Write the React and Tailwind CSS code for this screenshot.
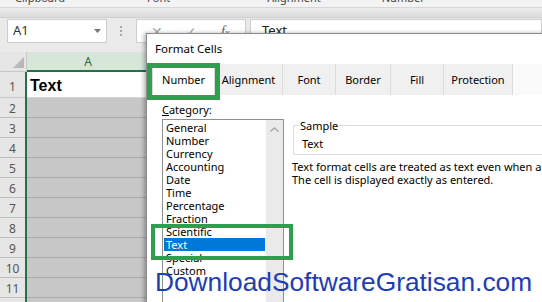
import React from "react";

const ui = { fontFamily: '"Noto Sans", "Open Sans", sans-serif' };
const arial = { fontFamily: '"Liberation Sans", Arial, sans-serif' };

const items = ["General","Number","Currency","Accounting","Date","Time","Percentage","Fraction","Scientific","Text","Special","Custom"];
const tabs = [
  { label: "Number", w: "w-[63px]" },
  { label: "Alignment", w: "w-[68px]" },
  { label: "Font", w: "w-[53px]" },
  { label: "Border", w: "w-[55px]" },
  { label: "Fill", w: "w-[53px]" },
  { label: "Protection", w: "w-[69px]" },
];

function Launcher() {
  return (
    <svg width="9" height="9" viewBox="0 0 9 9" className="mt-[-4px]">
      <path d="M0.5 0.5h8v8" fill="none" stroke="#777" />
      <path d="M3 3l4 4M7 4v3H4" fill="none" stroke="#777" />
    </svg>
  );
}

export default function App() {
  return (
    <div className="relative w-[542px] h-[302px] overflow-hidden bg-[#eaeaea]" style={ui}>
      {/* ribbon group labels */}
      <div className="h-[8px] bg-[#f3f3f3] overflow-hidden flex items-start text-[11px] text-[#444] border-b border-[#d6d6d6]">
        <div className="flex items-start mt-[-9px] leading-[13px]">
          <span className="ml-[15px]">Clipboard</span>
          <span className="ml-[18px] mt-[4px]"><Launcher /></span>
          <span className="ml-[55px]">Font</span>
          <span className="ml-[60px] mt-[4px]"><Launcher /></span>
          <span className="ml-[28px]">Alignment</span>
          <span className="ml-[30px] mt-[4px]"><Launcher /></span>
          <span className="ml-[22px]">Number</span>
          <span className="ml-[24px] mt-[4px]"><Launcher /></span>
        </div>
      </div>
      {/* ribbon bottom band */}
      <div className="h-[10px] bg-gradient-to-b from-[#ececec] to-[#dcdcdc] border-b border-[#cfcfcf]" />
      {/* formula bar */}
      <div className="h-[34px] flex items-start pt-[1px]">
        <div className="ml-[7px] w-[100px] h-[24px] bg-white border border-[#cdcdcd] flex items-center justify-between px-[5px]">
          <span className="text-[13px] text-[#333]">A1</span>
          <svg width="7" height="4" viewBox="0 0 7 4"><path d="M0 0h7L3.5 4z" fill="#777" /></svg>
        </div>
        <div className="ml-[13px] mt-[7px] flex flex-col gap-[2px]">
          <span className="w-[2px] h-[2px] bg-[#a8a8a8]" />
          <span className="w-[2px] h-[2px] bg-[#a8a8a8]" />
          <span className="w-[2px] h-[2px] bg-[#a8a8a8]" />
        </div>
        <div className="ml-[14px] w-[110px] h-[24px] bg-white border border-[#cdcdcd] flex items-center text-[#a6a6a6]">
          <span className="ml-[14px] text-[14px]">✕</span>
          <span className="ml-[22px] text-[14px]">✓</span>
          <span className="ml-[24px] text-[14px] italic text-[#666]" style={{ fontFamily: '"Liberation Serif", serif' }}>f<span className="text-[10px]">x</span></span>
        </div>
        <div className="ml-[4px] flex-1 h-[24px] bg-white border border-[#cdcdcd] flex items-center">
          <span className="ml-[11px] text-[13px] text-[#222]">Text</span>
        </div>
      </div>
      {/* sheet */}
      <div className="flex flex-col">
        <div className="flex h-[20px] shrink-0">
          <div className="w-[27px] bg-[#e6e6e6] border-r border-b border-[#c8c8c8] flex items-end justify-end pr-[2px] pb-[3px]">
            <svg width="11" height="11" viewBox="0 0 11 11"><path d="M11 0v11H0z" fill="#b8b8b8" /></svg>
          </div>
          <div className="w-[130px] bg-[#d6e7da] border-b-2 border-[#217346] flex items-center justify-center pt-[2px]">
            <span className="text-[12px] text-[#2a6a3e] ml-[-8px]">A</span>
          </div>
          <div className="flex-1 bg-[#e6e6e6] border-b border-[#c8c8c8]" />
        </div>
        <div className="flex h-[26px] shrink-0">
          <div className="w-[25px] bg-[#e6e6e6] border-b border-[#c8c8c8] flex items-center justify-center pt-[4px] text-[12px] text-[#555]">1</div>
          <div className="w-[2px] bg-[#217346]" />
          <div className="w-[130px] bg-white border-b border-[#d4d4d4] flex items-center pt-[3px]">
            <span className="ml-[3px] text-[16px] font-bold text-black" style={arial}>Text</span>
          </div>
          <div className="flex-1 bg-white" />
        </div>
        {[2,3,4,5,6,7,8,9,10,11,12].map((n) => (
          <div key={n} className="flex h-[20px] shrink-0">
            <div className="w-[25px] bg-[#e6e6e6] border-b border-[#bdbdbd] flex items-center justify-center pt-[2px] text-[12px] text-[#555]">{n}</div>
            <div className="w-[2px] bg-[#217346]" />
            <div className="w-[130px] bg-[#c7c7c7] border-b border-[#a9a9a9]" />
            <div className="flex-1 bg-white" />
          </div>
        ))}
      </div>

      {/* dialog */}
      <div className="absolute left-[146px] top-[33px] w-[420px] h-[290px] bg-white border border-[#8c8c8c] shadow-[-2px_0_4px_rgba(0,0,0,0.3)] flex flex-col">
        <div className="h-[30px] flex items-center pl-[8px] text-[11.5px] text-black">Format Cells</div>
        <div className="flex h-[31px] items-stretch">
          <div className="w-[5px]" />
          {tabs.map((t, i) => (
            <div
              key={t.label}
              className={
                i === 0
                  ? `${t.w} bg-white border-x border-t border-[#d9d9d9] flex items-center justify-center text-[11px] text-black`
                  : `${t.w} bg-[#f0f0f0] border-r border-[#dcdcdc] pt-[2px] flex items-center justify-center text-[11px] text-black`
              }
            >
              {t.label}
            </div>
          ))}
          <div className="flex-1 bg-[#fafafa]" />
        </div>
        <div className="flex flex-col pl-[15px] pt-[8px]">
          <div className="text-[11px] leading-[13px] text-black">
            <span className="underline">C</span>ategory:
          </div>
          <div className="flex mt-[3px] gap-[8px]">
            <div className="w-[122px] h-[190px] border border-[#8e9096] flex">
              <div className="w-[103px] pt-[1px] flex flex-col">
                {items.map((it) => (
                  <div
                    key={it}
                    className={
                      it === "Text"
                        ? "mx-[1px] h-[13px] leading-[13px] pl-[2px] bg-[#0078d7] text-white text-[11px]"
                        : "mx-[1px] h-[13px] leading-[13px] pl-[2px] text-black text-[11px]"
                    }
                  >
                    {it}
                  </div>
                ))}
              </div>
              <div className="w-[17px] bg-[#eaeaea] flex justify-center pt-[7px]">
                <svg width="9" height="5" viewBox="0 0 9 5"><path d="M0.5 4.5L4.5 0.8L8.5 4.5" fill="none" stroke="#a0a0a0" strokeWidth="1.2" /></svg>
              </div>
            </div>
            <div className="flex flex-col">
              <fieldset className="w-[300px] ml-[1px] border border-[#dcdcdc] pl-[8px] pt-[5px] pb-[4px]">
                <legend className="ml-[-3px] px-[1px] text-[11px] leading-[13px] text-black">Sample</legend>
                <div className="text-[11px] leading-[13px] text-black">Text</div>
              </fieldset>
              <div className="mt-[5px] text-[11px] leading-[13px] text-black whitespace-nowrap">
                <div>Text format cells are treated as text even when a number is in the cell.</div>
                <div>The cell is displayed exactly as entered.</div>
              </div>
            </div>
          </div>
        </div>
      </div>

      {/* highlight boxes */}
      <div className="absolute left-[147px] top-[63px] w-[73px] h-[37px] border-[5px] border-[#2e9e4f]" />
      <div className="absolute left-[151px] top-[224px] w-[142px] h-[36px] border-4 border-[#2e9e4f]" />

      {/* watermark */}
      <div className="absolute left-[155px] top-[269px] text-[26.3px] leading-[26px] text-[#1d3db5] whitespace-nowrap" style={arial}>
        DownloadSoftwareGratisan.com
      </div>
    </div>
  );
}
